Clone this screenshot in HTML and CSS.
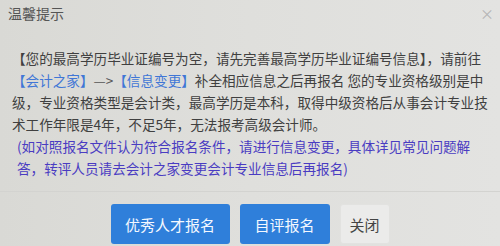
FILE: index.html
```html
<!DOCTYPE html>
<html lang="zh-CN">
<head>
  <meta charset="UTF-8" />
  <meta name="viewport" content="width=device-width, initial-scale=1" />
  <title>温馨提示</title>
  <link rel="stylesheet" href="styles.css">
</head>
<body>

<!-- 提示弹窗 -->
<div class="dialog">
  <div class="dialog-head">
    <span class="dialog-title">温馨提示</span>
    <span class="dialog-close">×</span>
  </div>

  <div class="dialog-body">
    <p class="msg">【您的最高学历毕业证编号为空，请先完善最高学历毕业证编号信息】，请前往<span class="link">【会计之家】</span><span class="arrow">—&gt;</span><span class="link">【信息变更】</span>补全相应信息之后再报名 您的专业资格级别是中级，专业资格类型是会计类，最高学历是本科，取得中级资格后从事会计专业技术工作年限是4年，不足5年，无法报考高级会计师。</p>
    <p class="note">(如对照报名文件认为符合报名条件，请进行信息变更，具体详见常见问题解<br>答，转评人员请去会计之家变更会计专业信息后再报名)</p>
  </div>

  <div class="dialog-foot">
    <button class="btn btn-blue btn-wide">优秀人才报名</button>
    <button class="btn btn-blue">自评报名</button>
    <button class="btn btn-plain">关闭</button>
  </div>
</div>

</body>
</html>
```

FILE: styles.css
```css
    body {
      margin: 0;
      font-family: "Noto Sans CJK SC", "Noto Sans", sans-serif;
      background: linear-gradient(to right, #d9d9d5 0%, #dfdfdc 50%, #e3e3e1 100%);
      color: #404040;
      height: 246px;
      overflow: hidden;
    }
    .dialog {
      display: flex;
      flex-direction: column;
      height: 100%;
    }
    .dialog-head {
      display: flex;
      justify-content: space-between;
      align-items: center;
      padding: 3px 6px 0 8px;
      height: 20px;
    }
    .dialog-title {
      font-size: 14px;
      color: #555;
    }
    .dialog-close {
      font-size: 14px;
      color: #b5b5b5;
    }
    .dialog-body {
      padding: 24px 8px 0 12px;
      width: 478px;
      font-size: 13.6px;
      line-height: 22px;
    }
    .msg, .note {
      margin: 0;
    }
    .link, .arrow {
      display: inline-block;
      vertical-align: top;
    }
    .link {
      color: #4076d6;
    }
    .arrow {
      color: #555;
    }
    .note {
      color: #4a3cc2;
      padding-left: 5px;
    }
    .dialog-foot {
      display: flex;
      justify-content: center;
      gap: 10px;
      margin-top: 12px;
      padding-top: 12px;
      border-top: 1px solid #d3d3d0;
    }
    .btn {
      height: 40px;
      border: none;
      border-radius: 3px;
      font-family: inherit;
      font-size: 15px;
      cursor: pointer;
    }
    .btn-blue {
      width: 90px;
      background: #2f7fda;
      color: #f4f8ff;
    }
    .btn-wide {
      width: 119px;
    }
    .btn-plain {
      width: 50px;
      background: #ebebea;
      color: #444;
      border: 1px solid #e2e2e0;
    }
```
